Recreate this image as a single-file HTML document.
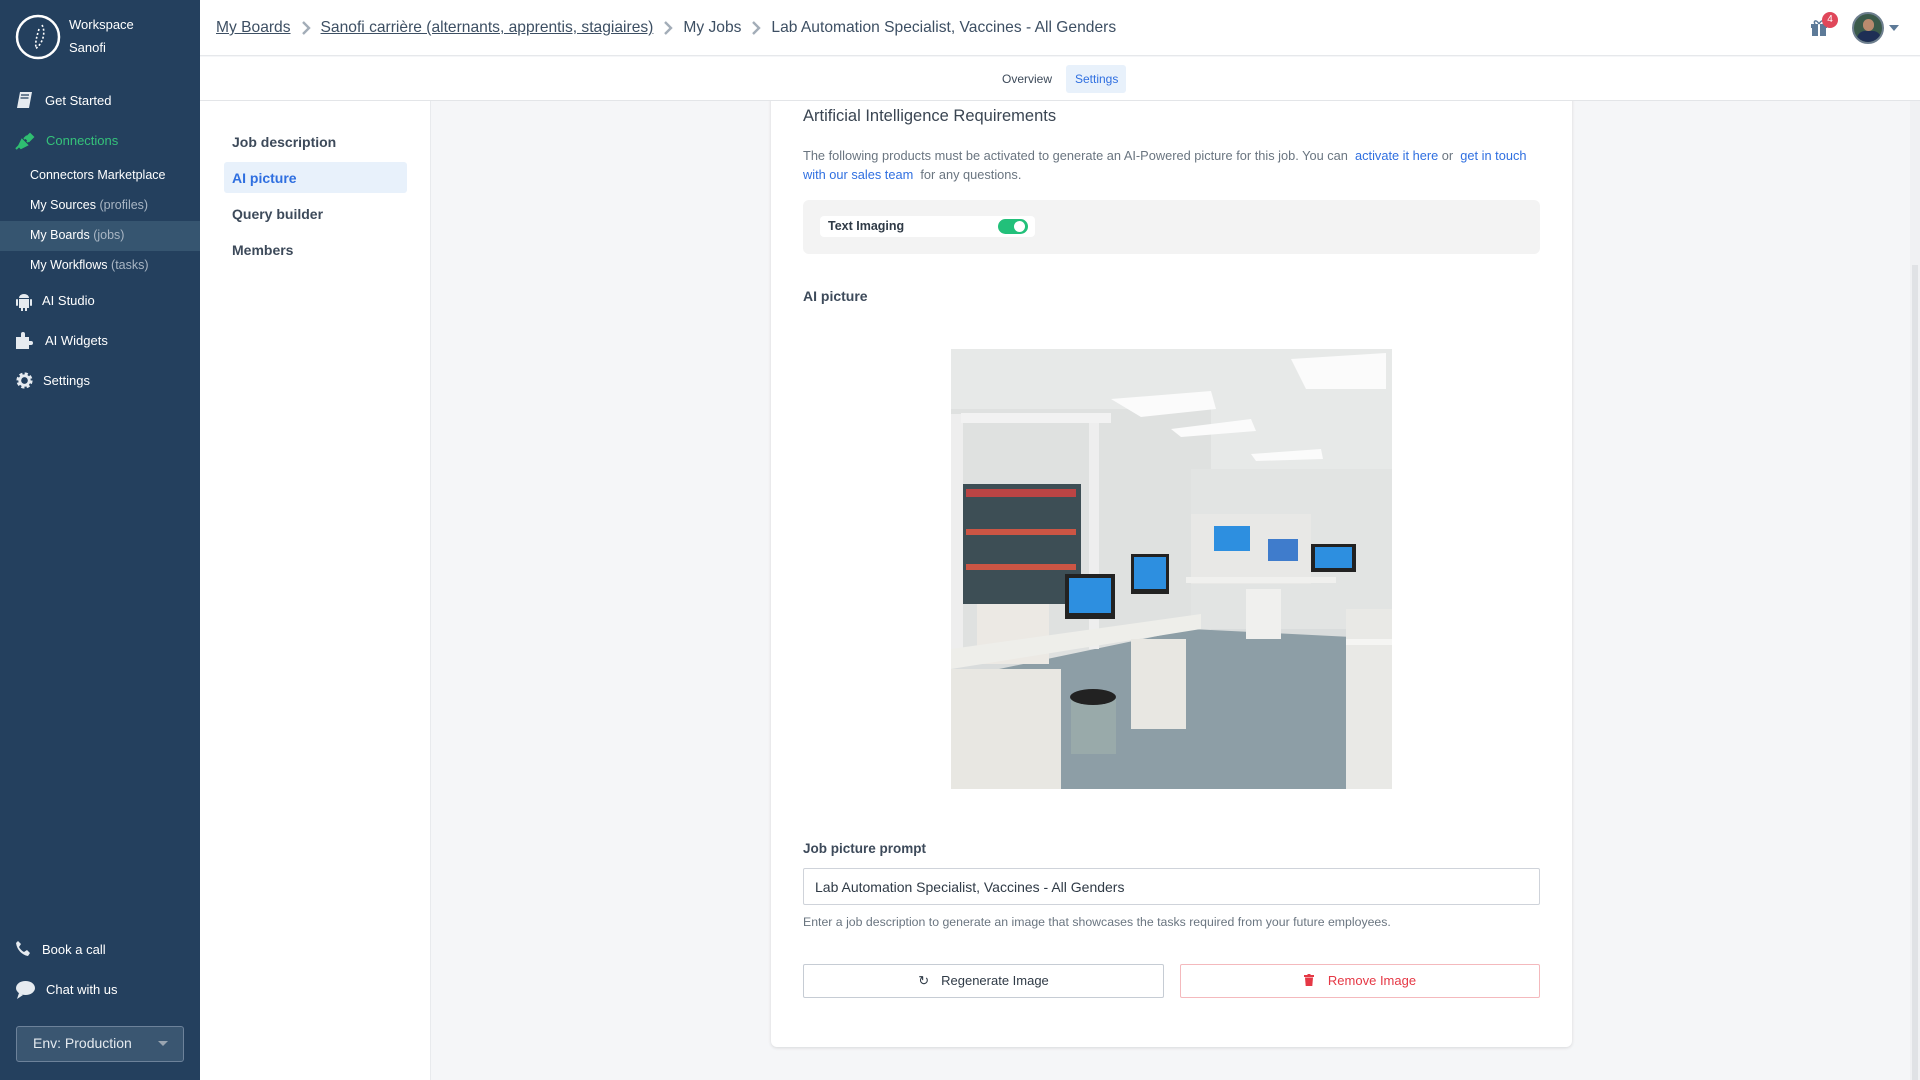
<!DOCTYPE html>
<html><head><meta charset="utf-8"><style>
*{box-sizing:border-box;margin:0;padding:0}
body{width:1920px;height:1080px;overflow:hidden;font-family:"Liberation Sans",Arial,sans-serif;background:#f5f6f8;position:relative;color:#2f3e4e}
.abs{position:absolute}
#side{left:0;top:0;width:200px;height:1080px;background:#24405e;color:#fff}
.si{position:absolute;left:0;font-size:13px;color:#fff;white-space:nowrap}
.sub{left:30px;font-size:12.5px}
.sub span{color:#a9b6c4}
#top{left:200px;top:0;width:1720px;height:56px;background:#fff;border-bottom:1px solid #e6e8eb;z-index:3}
#tabs{left:200px;top:57px;width:1720px;height:44px;background:#fff;border-bottom:1px solid #e3e5e8;z-index:3}
#bcs{position:absolute;left:16px;top:19px;display:flex;align-items:center;gap:10px;font-size:15.6px;color:#3d4f63;white-space:nowrap}
#bcs u{text-decoration:underline}
#lnav{left:200px;top:101px;width:231px;height:979px;background:#fff;border-right:1px solid #e8eaed}
.ln{position:absolute;left:32px;font-size:14px;font-weight:bold;color:#3d4a5a}
#card{left:771px;top:80px;width:801px;height:967px;background:#fff;border-radius:0 0 6px 6px;box-shadow:0 1px 3px rgba(0,0,0,.12)}
.t{position:absolute;white-space:nowrap}
a{color:#2f6fe0;text-decoration:none}
.btn{position:absolute;top:964px;height:34px;background:#fff;border:1px solid #c6ccd4;border-radius:2px;font-size:13px;text-align:center;line-height:32px}
</style></head><body>

<div id="side" class="abs">
  <svg class="abs" style="left:15px;top:14px" width="46" height="46" viewBox="0 0 46 46"><circle cx="23" cy="23" r="21" fill="none" stroke="#fff" stroke-width="2.5"/><path d="M27 11 C31 18 28 30 20 35" fill="none" stroke="#fff" stroke-width="1.6" stroke-dasharray="2 2"/><path d="M24 15 C22 22 20 28 21 34" fill="none" stroke="#fff" stroke-width="1.6" stroke-dasharray="2 2"/></svg>
  <div class="si" style="left:69px;top:17px;font-size:13px">Workspace</div>
  <div class="si" style="left:69px;top:40px;font-size:13px">Sanofi</div>
  <svg class="abs" style="left:16px;top:91px" width="18" height="18" viewBox="0 0 18 18"><path d="M4 1h12l-3 16H1z" fill="#e6ebf0"/><path d="M5 4h8M4.5 7h8" stroke="#24405e" stroke-width="1.3"/></svg>
  <div class="si" style="left:45px;top:93px">Get Started</div>
  <svg class="abs" style="left:15px;top:130px" width="22" height="20" viewBox="0 0 22 20"><path d="M1 19l4-4M4 16l3-6 5 5-6 3zM9 9l3-3M12 12l3-3M11 8l4-4 3 3-4 4z" fill="#2fbf71" stroke="#2fbf71" stroke-width="2"/></svg>
  <div class="si" style="left:46px;top:133px;color:#35c27a">Connections</div>
  <div class="si sub" style="top:168px">Connectors Marketplace</div>
  <div class="si sub" style="top:198px">My Sources <span>(profiles)</span></div>
  <div class="abs" style="left:0;top:221px;width:200px;height:30px;background:#365570"></div>
  <div class="si sub" style="top:228px">My Boards <span>(jobs)</span></div>
  <div class="si sub" style="top:258px">My Workflows <span>(tasks)</span></div>
  <svg class="abs" style="left:15px;top:292px" width="18" height="20" viewBox="0 0 18 20"><path d="M4 6a5 4 0 0 1 10 0z" fill="#e6ebf0"/><rect x="4" y="7" width="10" height="9" fill="#e6ebf0"/><rect x="1" y="7" width="2" height="7" rx="1" fill="#e6ebf0"/><rect x="15" y="7" width="2" height="7" rx="1" fill="#e6ebf0"/><rect x="6" y="15" width="2" height="4" fill="#e6ebf0"/><rect x="10" y="15" width="2" height="4" fill="#e6ebf0"/></svg>
  <div class="si" style="left:42px;top:293px">AI Studio</div>
  <svg class="abs" style="left:15px;top:331px" width="20" height="19" viewBox="0 0 20 19"><path d="M1 6h5V3a2 2 0 0 1 4 0v3h4v4h2a2 2 0 0 1 0 4h-2v4H1z" fill="#e6ebf0"/></svg>
  <div class="si" style="left:45px;top:333px">AI Widgets</div>
  <svg class="abs" style="left:15px;top:371px" width="19" height="19" viewBox="0 0 20 20"><circle cx="10" cy="10" r="6.5" fill="none" stroke="#e6ebf0" stroke-width="4" stroke-dasharray="3 2.1"/><circle cx="10" cy="10" r="5" fill="none" stroke="#e6ebf0" stroke-width="3"/></svg>
  <div class="si" style="left:43px;top:373px">Settings</div>
  <svg class="abs" style="left:15px;top:940px" width="17" height="17" viewBox="0 0 17 17"><path d="M3 1l3 3-2 3c1 2 3 4 5 5l3-2 3 3-2 3C7 15 2 10 1 3z" fill="#e6ebf0"/></svg>
  <div class="si" style="left:42px;top:942px">Book a call</div>
  <svg class="abs" style="left:15px;top:980px" width="21" height="20" viewBox="0 0 21 20"><ellipse cx="10.5" cy="8" rx="9.5" ry="7" fill="#e6ebf0"/><path d="M4 13l-2 6 6-4z" fill="#e6ebf0"/></svg>
  <div class="si" style="left:46px;top:982px">Chat with us</div>
  <div class="abs" style="left:16px;top:1026px;width:168px;height:36px;background:#3a5671;border:1px solid #6d829a;border-radius:3px"></div>
  <div class="si" style="left:33px;top:1035px;font-size:14px;color:#e5eaef">Env: Production</div>
  <div class="abs" style="left:158px;top:1041px;width:0;height:0;border-left:5px solid transparent;border-right:5px solid transparent;border-top:5px solid #9aa5b1"></div>
</div>

<div id="top" class="abs">
  <div id="bcs">
    <u>My Boards</u>
    <svg width="10" height="14" viewBox="0 0 10 14"><path d="M2 1l6 6-6 6" fill="none" stroke="#a3adb8" stroke-width="2.4"/></svg>
    <u>Sanofi carrière (alternants, apprentis, stagiaires)</u>
    <svg width="10" height="14" viewBox="0 0 10 14"><path d="M2 1l6 6-6 6" fill="none" stroke="#a3adb8" stroke-width="2.4"/></svg>
    <span>My Jobs</span>
    <svg width="10" height="14" viewBox="0 0 10 14"><path d="M2 1l6 6-6 6" fill="none" stroke="#a3adb8" stroke-width="2.4"/></svg>
    <span>Lab Automation Specialist, Vaccines - All Genders</span>
  </div>
  <svg class="abs" style="left:1610px;top:19px" width="18" height="17" viewBox="0 0 18 17"><rect x="1" y="5" width="16" height="4" fill="#5d7a98"/><rect x="2" y="9" width="14" height="8" fill="#5d7a98"/><rect x="8" y="5" width="2" height="12" fill="#fff"/><path d="M9 5C6 0 3 2 5 5M9 5c3-5 6-3 4 0" fill="none" stroke="#5d7a98" stroke-width="1.5"/></svg>
  <div class="abs" style="left:1622px;top:12px;width:16px;height:16px;border-radius:8px;background:#e0475a;color:#fff;font-size:10px;text-align:center;line-height:16px">4</div>
  <div class="abs" style="left:1652px;top:12px;width:32px;height:32px;border-radius:16px;background:#3b5a4a;border:2px solid #6e7f8f;overflow:hidden"><div style="position:absolute;left:9px;top:5px;width:11px;height:12px;border-radius:6px;background:#b98a6e"></div><div style="position:absolute;left:3px;top:17px;width:24px;height:14px;border-radius:8px 8px 0 0;background:#1e2f55"></div></div>
  <div class="abs" style="left:1689px;top:25px;width:0;height:0;border-left:5px solid transparent;border-right:5px solid transparent;border-top:6px solid #5d7a98"></div>
</div>

<div id="tabs" class="abs">
  <div class="t" style="left:802px;top:15px;font-size:12px;color:#3d4a5a">Overview</div>
  <div class="abs" style="left:866px;top:8px;width:60px;height:28px;background:#e8f1fb;border-radius:3px"></div>
  <div class="t" style="left:875px;top:15px;font-size:12px;color:#2f6fe0">Settings</div>
</div>

<div id="lnav" class="abs">
  <div class="ln" style="top:33px">Job description</div>
  <div class="abs" style="left:24px;top:61px;width:183px;height:31px;background:#e8f1fb;border-radius:3px"></div>
  <div class="ln" style="top:69px;color:#2f6fe0">AI picture</div>
  <div class="ln" style="top:105px">Query builder</div>
  <div class="ln" style="top:141px">Members</div>
</div>

<div class="abs" style="left:1910px;top:101px;width:10px;height:979px;background:#f0f1f3"></div>
<div class="abs" style="left:1912px;top:265px;width:6px;height:815px;background:#e0e2e5"></div>

<div id="card" class="abs"></div>
<div class="t" style="left:803px;top:107px;font-size:16.5px;color:#3a4552">Artificial Intelligence Requirements</div>
<div class="t" style="left:803px;top:146px;font-size:12.8px;color:#6a7580;line-height:19px">The following products must be activated to generate an AI-Powered picture for this job. You can &nbsp;<a>activate it here</a> or &nbsp;<a>get in touch</a><br><a>with our sales team</a> &nbsp;for any questions.</div>
<div class="abs" style="left:803px;top:200px;width:737px;height:54px;background:#f3f3f3;border-radius:6px"></div>
<div class="abs" style="left:820px;top:216px;width:215px;height:21px;background:#fff;border-radius:4px"></div>
<div class="t" style="left:828px;top:219px;font-size:12.5px;font-weight:bold;color:#2f3a46">Text Imaging</div>
<div class="abs" style="left:998px;top:219px;width:30px;height:15px;background:#22c07a;border-radius:8px"></div>
<div class="abs" style="left:1014px;top:221px;width:11px;height:11px;background:#fff;border-radius:6px"></div>
<div class="t" style="left:803px;top:288px;font-size:14px;font-weight:bold;color:#3d4a5a">AI picture</div>

<svg class="abs" style="left:951px;top:349px" width="441" height="440" viewBox="0 0 441 440">
  <rect width="441" height="440" fill="#d9dcdc"/>
  <polygon points="0,0 441,0 441,130 260,140 140,100 0,60" fill="#e7e9e8"/>
  <rect x="0" y="60" width="260" height="250" fill="#dfe1e0"/>
  <rect x="240" y="120" width="201" height="160" fill="#e2e4e3"/>
  <polygon points="0,330 240,280 441,290 441,440 0,440" fill="#8d9ea6"/>
  <polygon points="160,50 260,42 265,60 190,68" fill="#fbfbfb"/>
  <polygon points="220,80 300,70 305,82 230,88" fill="#fbfbfb"/>
  <polygon points="340,10 435,4 435,40 355,40" fill="#fbfbfb"/>
  <polygon points="300,105 370,100 372,110 305,112" fill="#fbfbfb"/>
  <rect x="10" y="135" width="120" height="120" fill="#3d4e55"/>
  <rect x="15" y="140" width="110" height="8" fill="#b44"/><rect x="15" y="180" width="110" height="6" fill="#c54"/><rect x="15" y="215" width="110" height="6" fill="#c54"/>
  <rect x="0" y="65" width="12" height="250" fill="#eee"/><rect x="138" y="70" width="10" height="230" fill="#eee"/>
  <rect x="10" y="64" width="150" height="10" fill="#f2f2f2"/>
  <rect x="114" y="225" width="50" height="45" fill="#222"/><rect x="118" y="229" width="42" height="35" fill="#2d8fe0"/>
  <rect x="180" y="205" width="38" height="40" fill="#222"/><rect x="183" y="208" width="32" height="32" fill="#2d8fe0"/>
  <rect x="26" y="255" width="72" height="60" fill="#ece9e4"/>
  <polygon points="0,300 250,265 250,280 0,320" fill="#eeeeea"/>
  <rect x="0" y="320" width="110" height="120" fill="#e8e7e2"/><rect x="180" y="290" width="55" height="90" fill="#e8e7e2"/>
  <rect x="120" y="350" width="45" height="55" fill="#9aa"/><ellipse cx="142" cy="348" rx="23" ry="8" fill="#222"/>
  <rect x="240" y="165" width="120" height="70" fill="#e8e8e6"/><rect x="263" y="177" width="36" height="25" fill="#2d8fe0"/>
  <rect x="317" y="190" width="30" height="22" fill="#3f7ccc"/>
  <rect x="360" y="195" width="45" height="28" fill="#222"/><rect x="364" y="198" width="37" height="21" fill="#2d8fe0"/>
  <rect x="235" y="228" width="150" height="6" fill="#f0f0ee"/><rect x="295" y="240" width="35" height="50" fill="#f0f0ee"/>
  <rect x="395" y="260" width="46" height="180" fill="#e9e9e6"/><rect x="395" y="290" width="46" height="6" fill="#f5f5f3"/>
</svg>

<div class="t" style="left:803px;top:841px;font-size:13.5px;font-weight:bold;color:#3d4a5a">Job picture prompt</div>
<div class="abs" style="left:803px;top:868px;width:737px;height:37px;background:#fff;border:1px solid #cfd3da;border-radius:2px"></div>
<div class="t" style="left:815px;top:879px;font-size:14px;color:#2f3a46">Lab Automation Specialist, Vaccines - All Genders</div>
<div class="t" style="left:803px;top:915px;font-size:12.3px;color:#6a7580">Enter a job description to generate an image that showcases the tasks required from your future employees.</div>
<div class="btn" style="left:803px;width:361px;color:#2f3a46"><span style="font-size:13px;margin-right:12px">&#8635;</span>Regenerate Image</div>
<div class="btn" style="left:1180px;width:360px;border-color:#f4b9bd;color:#e53845"><svg width="10" height="12" viewBox="0 0 10 12" style="margin-right:14px;vertical-align:-1px"><rect x="0" y="1" width="10" height="2" fill="#e53845"/><rect x="3.5" y="0" width="3" height="2" fill="#e53845"/><path d="M1 3.5h8l-.7 8.5H1.7z" fill="#e53845"/></svg>Remove Image</div>
</body></html>
